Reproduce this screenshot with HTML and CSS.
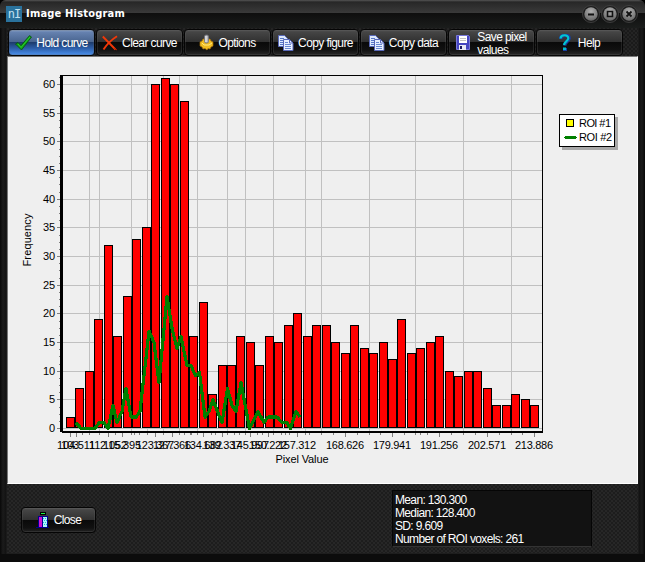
FILE: index.html
```
<!DOCTYPE html>
<html lang="en">
<head>
    <meta charset="UTF-8">
    <title>Image Histogram</title>
    <link rel="stylesheet" href="styles.css">
</head>
<body>
    <div class="window">
        <div class="titlebar">
            <div class="logo">nI</div>
            <div class="title">Image Histogram</div>
            <div class="controls">
                <svg width="18" height="18" viewBox="0 0 18 18"><use href="#knob"/><path d="M6 9.500h6" stroke="#111" stroke-width="2"/></svg>
                <svg width="18" height="18" viewBox="0 0 18 18"><use href="#knob"/><path d="M6.500 6.500h5v5h-5z" fill="none" stroke="#111" stroke-width="1.600"/></svg>
                <svg width="18" height="18" viewBox="0 0 18 18"><use href="#knob"/><path d="M6.500 6.500l5 5M11.500 6.500l-5 5" stroke="#111" stroke-width="1.800"/></svg>
            </div>
        </div>

        <div class="toolbar">
            <button class="btn active">
                <svg width="17" height="16" viewBox="0 0 17 16"><path d="M.5 9l2.500-1.500L6 10.500 14.500.6 16.500 2 6.500 15z" fill="#10a018" stroke="#06500c" stroke-width=".8"/><path d="M3 9l3 3.500L15 2" fill="none" stroke="#30d838" stroke-width=".8"/></svg>
                <span>Hold curve</span>
            </button>
            <button class="btn">
                <svg width="16" height="16" viewBox="0 0 16 16"><path d="M.8 1.500L13.500 14.500M15 1.200C9 5 5 9 1.500 14.500" fill="none" stroke="#f03808" stroke-width="1.900"/><path d="M12 13l3 2" stroke="#c02000"/></svg>
                <span>Clear curve</span>
            </button>
            <button class="btn">
                <svg width="15" height="17" viewBox="0 0 15 17"><path d="M1 8l2-1 1-2h7l1 2 2 1v4l-2 1-1 2-2-.5L8 16l-2-1.500-2 .5-1-2-2-1z" fill="#f0bc20" stroke="#a87008" stroke-width=".7"/><path d="M3 9l2 2h5l3-2" fill="none" stroke="#ffe880"/><rect x="5.500" y="1" width="4" height="8" rx="1.500" fill="#b4b4b8" stroke="#707078" stroke-width=".8"/><path d="M7 2v6" stroke="#f4f4f4"/></svg>
                <span>Options</span>
            </button>
            <button class="btn">
                <svg width="16" height="16" viewBox="0 0 16 16"><use href="#copy"/></svg>
                <span>Copy figure</span>
            </button>
            <button class="btn">
                <svg width="16" height="16" viewBox="0 0 16 16"><use href="#copy"/></svg>
                <span>Copy data</span>
            </button>
            <button class="btn">
                <svg width="14" height="15" viewBox="0 0 14 15"><path d="M.5.5h12l1 1v13H.5z" fill="#4444c0" stroke="#7878d8"/><path d="M3 1h8v7H3z" fill="#fff"/><path d="M4 3.500h6M4 5.500h6" stroke="#c0c0c0"/><path d="M3 10h7v5H3z" fill="#e8e8f4"/><path d="M4 11h2v3H4z" fill="#181860"/></svg>
                <span class="two-lines">Save pixel<br>values</span>
            </button>
            <button class="btn help">
                <svg width="12" height="17" viewBox="0 0 12 17"><path d="M1.500 5C2 0 10.500 0 10 4.500 9.800 7.500 6 7.500 5.500 11.500" fill="none" stroke="#1a40a0" stroke-width="3.600"/><path d="M1.500 4.500C2 .3 9.500.3 9.300 4.300 9.200 7 5.500 7.500 5 11" fill="none" stroke="#00c8d0" stroke-width="2.100"/><path d="M4 14h4v3H4z" fill="#1a40a0"/><path d="M4 13.500h3v2.500H4z" fill="#00b8d0"/></svg>
                <span>Help</span>
            </button>
        </div>

        <div class="chart">
            <svg id="plot" width="629" height="426" viewBox="8 57 629 426"></svg>
        </div>

        <div class="footer">
            <button class="btn close">
                <svg width="13" height="16" viewBox="0 0 13 16" shape-rendering="crispEdges"><path d="M4 0h6v3H4z" fill="#000"/><path d="M5 1h4v1H5z" fill="#20f040"/><path d="M2 4h10v11H2zM0 15h13v1H0z" fill="#000090"/><path d="M3 5h3v10H3z" fill="#d010d0"/><path d="M7 5h4v10H7z" fill="#b0f4fc"/><path d="M7 6h1v1H7zM9 6h1v1H9zM8 8h1v1H8zM10 8h1v1h-1zM7 10h1v1H7zM9 10h1v1H9zM8 12h1v1H8zM10 12h1v1h-1z" fill="#18c0d8"/></svg>
                <span>Close</span>
            </button>
            <div class="stats">
                <div>Mean: 130.300</div>
                <div>Median: 128.400</div>
                <div>SD: 9.609</div>
                <div>Number of ROI voxels: 261</div>
            </div>
        </div>
    </div>

    <svg class="defs" width="0" height="0">
        <defs>
            <radialGradient id="metal" cx="50%" cy="30%" r="70%">
                <stop offset="0" stop-color="#b0b0b0"/>
                <stop offset="1" stop-color="#686868"/>
            </radialGradient>
            <g id="knob">
                <circle cx="9" cy="9" r="8.500" fill="#1a1a1a" stroke="#484848" stroke-width=".8"/>
                <circle cx="9" cy="9" r="6.700" fill="url(#metal)"/>
            </g>
            <g id="copy">
                <path d="M.5.5h6l3 3v8h-9z" fill="#dce8fc" stroke="#5868b8"/>
                <path d="M2 3.500h4M2 5.500h5M2 7.500h5M2 9.500h4" stroke="#5878c8"/>
                <path d="M5.500 4.500h6l3.500 3.500v7.500H5.500z" fill="#e8f0ff" stroke="#5868b8"/>
                <path d="M11.500 4.500V8H15" fill="none" stroke="#5868b8"/>
                <path d="M7 7.500h3M7 9.500h6M7 11.500h6M7 13.500h6" stroke="#6888d0"/>
            </g>
        </defs>
    </svg>
    <script src="script.js"></script>
</body>
</html>
```
FILE: styles.css
```
* {
    box-sizing: border-box;
}
body {
    margin: 0;
    background: #000;
    font-family: "Liberation Sans", Arial, sans-serif;
    font-size: 12px;
    color: #fff;
}
.window {
    width: 645px;
    height: 562px;
    display: flex;
    flex-direction: column;
    padding: 0 7px;
    border-radius: 6px 6px 0 0;
    border-bottom: 8px solid #0c0c0c;
    overflow: hidden;
    background: linear-gradient(90deg, #080808 0, #1b1b1b 3px, #121212 6px, #222 7px, #222 638px, #121212 639px, #1a1a1a 642px, #080808 645px);
}
.titlebar {
    height: 28px;
    margin: 0 -7px;
    padding: 0 6px;
    flex: none;
    display: flex;
    align-items: center;
    background: linear-gradient(#555 0, #272727 2px, #3a3a3a 13px, #0e0e0e 13px, #1b1d1c 28px);
}
.logo {
    width: 16px;
    height: 16px;
    background: #2a729c;
    color: #bfe0f0;
    font: 12px/16px "DejaVu Sans Mono", monospace;
    letter-spacing: -1px;
    text-align: center;
}
.title {
    flex: 1;
    margin-left: 4px;
    font: bold 11px/16px "DejaVu Sans Condensed", "DejaVu Sans", sans-serif;
    font-stretch: condensed;
    letter-spacing: 0.2px;
}
.controls {
    display: flex;
    gap: 1px;
    padding-right: 1px;
}
.controls svg {
    display: block;
}
.toolbar {
    height: 28px;
    flex: none;
    display: flex;
    align-items: center;
    gap: 1px;
    padding: 1px 0 0 1px;
    background: repeating-conic-gradient(#1a1a1a 0 25%, #242424 0 50%) 0 0 / 4px 4px;
}
.btn {
    width: 87px;
    height: 27px;
    flex: none;
    display: flex;
    align-items: center;
    justify-content: center;
    gap: 4px;
    padding: 0;
    border: 1px solid #050505;
    border-radius: 4px;
    color: #fff;
    font: 12px/13px "Liberation Sans", Arial, sans-serif;
    letter-spacing: -0.6px;
    text-align: left;
    white-space: nowrap;
    background: linear-gradient(#555 0, #454545 2px, #303030 12px, #090909 12px, #111 20px, #282828 25px);
    box-shadow: inset 0 0 0 1px rgba(100, 100, 100, 0.25);
}
.btn.active {
    background: linear-gradient(#90a8cc 0, #6682b0 2px, #48648f 12px, #1c3968 12px, #2c5ca5 18px, #4a90ed 25px);
}
.btn svg {
    display: block;
    flex: none;
}
.btn span {
    padding-top: 1px;
}
.btn .two-lines {
    padding: 2px 0 0 1px;
    margin-left: 2px;
}
.help {
    gap: 7px;
}
.chart {
    height: 428px;
    flex: none;
    border: 1px solid #777;
    border-right-color: #fff;
    border-bottom-color: #fff;
    background: #efefef;
}
.chart svg {
    display: block;
}
.chart text {
    font: 11px "Liberation Sans", Arial, sans-serif;
    fill: #000;
}
.footer {
    flex: 1;
    display: flex;
    align-items: flex-start;
    justify-content: space-between;
    padding: 6px 46px 0 14px;
    border-bottom: 1px solid #1e1e1e;
    background: repeating-conic-gradient(#1d1d1d 0 25%, #272727 0 50%) 0 0 / 4px 4px;
}
.close {
    width: 75px;
    height: 26px;
    margin-top: 17px;
    gap: 5px;
}
.stats {
    width: 200px;
    height: 57px;
    padding: 3px 2px;
    border: 1px solid #050505;
    border-bottom-color: #333;
    background: #121212;
    line-height: 13px;
    letter-spacing: -0.65px;
    white-space: nowrap;
}
.defs {
    position: absolute;
}
```
FILE: script.js
```
const plot = document.getElementById('plot');

const bars = [2, 7, 10, 19, 32, 16, 23, 33, 35, 60, 61, 60, 57, 16, 22, 6, 11, 11, 16, 15,
    11, 16, 15, 18, 20, 16, 18, 18, 15, 13, 18, 14, 13, 15, 12, 19, 13, 14, 15, 16,
    10, 9, 10, 10, 7, 4, 4, 6, 5, 4];

// held curve, [x, frequency]
const curve = [[76, 1], [81, 0], [95, 0], [99, 1], [104, 1], [108, 0], [113, 4], [117, 1], [122, 3],
    [126, 7], [131, 2], [136, 2], [140, 3], [149, 17], [154, 15], [159, 8], [167, 23], [172, 17.5],
    [177, 14], [181, 16], [187, 11], [191, 11], [195.5, 9.2], [199.5, 9.8], [205, 2], [209, 3],
    [213, 5], [222, 1], [227.5, 7], [232, 4], [236, 3], [241, 8], [249.5, 0], [258, 3],
    [264, 1], [268, 2], [277, 2], [282, 1], [287, 1], [290.5, 0], [296, 3], [300, 2]];

const gridX = [89, 99, 131, 147, 163, 179, 197, 227, 245, 273, 305, 321, 369, 415, 463, 511];
const minorX = [82, 89, 99, 115, 131, 134, 139, 147, 163, 179, 184, 190, 191, 197, 211, 215, 227,
    234, 239, 245, 257, 262, 273, 281, 285, 289, 305, 309, 321, 333, 357, 369, 380, 404, 415, 420, 427, 451, 463, 475, 499, 511, 522];
const labelsX = [[70, '103'], [76, '104.511'], [108, '112.052'], [122, '115.395'], [155, '123.367'],
    [172, '127.366'], [203, '134.682'], [222, '139.337'], [250, '145.997'], [268, '150.222'],
    [297, '157.312'], [345, '168.626'], [392, '179.941'], [439, '191.256'], [487, '202.571'], [534, '213.886']];

const yOf = v => 428 - v * 5.733;
const rect = (x, y, w, h, fill) => `<rect x="${x}" y="${y}" width="${w}" height="${h}" fill="${fill}"/>`;
const text = (x, y, w, s, anchor) => `<text x="${x}" y="${y}" textLength="${w}" text-anchor="${anchor}">${s}</text>`;

let shapes = '';
let texts = '';

// grid
for (let v = 0; v <= 60; v += 5) {
    const y = Math.round(yOf(v));
    shapes += rect(63, y, 479, 1, '#c0c0c0') + rect(57, y, 4, 1, '#808080');
    texts += text(55, y + 4, v < 10 ? 6 : 12, v, 'end');
}
for (let v = 0; v < 62; v += 1.25) {
    shapes += rect(59, Math.round(yOf(v)), 2, 1, '#808080');
}
gridX.forEach(x => shapes += rect(x, 76, 1, 355, '#c0c0c0'));

// bars
bars.forEach((v, i) => {
    const x = Math.round(66 + i * 9.47);
    const y = Math.round(yOf(v));
    shapes += rect(x, y, 9, 428 - y, '#000') + rect(x + 1, y + 1, 7, 426 - y, '#f00');
});

// axes
minorX.forEach(x => shapes += rect(x, 433, 1, 2, '#808080'));
labelsX.forEach(([x, s]) => {
    shapes += rect(x, 433, 1, 4, '#808080');
    texts += text(x, 449, s.length > 3 ? 38 : 18, s, 'middle');
});
shapes += rect(60, 75, 3, 357, '#000') + rect(60, 75, 483, 1, '#000');
shapes += rect(542, 75, 1, 357, '#000') + rect(62, 431, 481, 2, '#000');

const points = curve.map(([x, v]) => `${x},${yOf(v) + 0.5}`).join(' ');
const line = `<polyline points="${points}" fill="none" stroke="#008000" stroke-width="3.2" stroke-linejoin="round" shape-rendering="crispEdges"/>`;

texts += text(302, 463, 53, 'Pixel Value', 'middle');
texts += `<text transform="translate(31 240) rotate(-90)" textLength="53" text-anchor="middle">Frequency</text>`;

// legend
const legend = rect(562, 117, 56, 33, '#a8a8a8') + rect(559, 114, 56, 33, '#000') + rect(560, 115, 54, 31, '#fff')
    + rect(566, 119, 8, 8, '#000') + rect(567, 120, 6, 6, '#ff0') + rect(565, 136, 11, 3, '#008000') + rect(564, 137, 13, 1, '#008000');
texts += text(579, 127, 32, 'ROI #1', 'start') + text(579, 141, 33, 'ROI #2', 'start');

plot.innerHTML = `<g shape-rendering="crispEdges">${shapes}${legend}</g>${line}${texts}`;
```
